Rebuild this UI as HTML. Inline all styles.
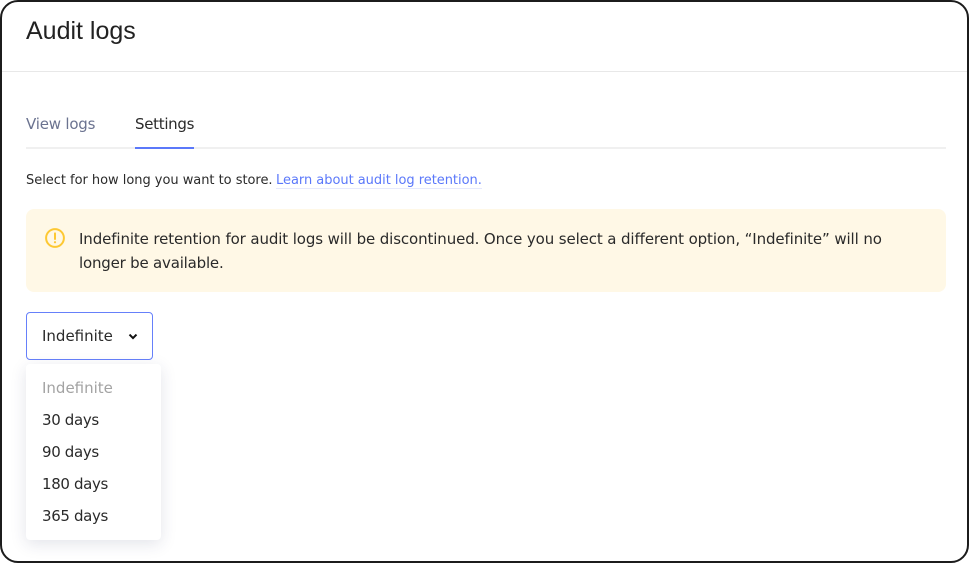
<!DOCTYPE html>
<html><head><meta charset="utf-8"><style>
html,body{margin:0;padding:0;width:969px;height:563px;overflow:hidden;background:#fff}
body{position:relative;font-family:"DejaVu Sans",sans-serif;color:#2a2a2a}
.a{position:absolute;white-space:nowrap}
.t{font-size:15px;line-height:24px;height:24px}
.d{letter-spacing:-.35px}
.s{font-size:13px;line-height:20px;letter-spacing:-.03px}
</style></head><body>
<div class="a" style="left:0;top:0;width:965px;height:559px;border:2px solid #1c1c1c;border-radius:18px"></div>
<div class="a" style="left:26px;top:15px;font-family:'Liberation Sans',sans-serif;font-size:25px;line-height:32px;color:#222">Audit logs</div>
<div class="a" style="left:2px;top:71px;width:965px;height:1px;background:#e8e8e8"></div>
<div class="a t" style="left:26px;top:112px;color:#6b7390;letter-spacing:-.2px">View logs</div>
<div class="a t" style="left:135px;top:112px;color:#2a2a2a;letter-spacing:-.3px">Settings</div>
<div class="a" style="left:26px;top:147px;width:920px;height:2px;background:#f0f0f0"></div>
<div class="a" style="left:135px;top:147px;width:59px;height:2px;background:#5b78fa"></div>
<div class="a s" style="left:26px;top:171px">Select for how long you want to store.</div>
<div class="a s" style="left:276px;top:171px;color:#5b78fa;border-bottom:1px solid #e6e9fd;height:17px">Learn about audit log retention.</div>
<div class="a" style="left:26px;top:209px;width:920px;height:83px;background:#fff8e6;border-radius:8px"></div>
<svg class="a" style="left:45px;top:228px" width="20" height="20" viewBox="0 0 20 20"><circle cx="10" cy="10" r="8.9" fill="none" stroke="#fdc833" stroke-width="2"/><path d="M10 5.4V11" stroke="#fdc833" stroke-width="2" stroke-linecap="round"/><circle cx="10" cy="14.2" r="1.1" fill="#fdc833"/></svg>
<div class="a t" style="left:79px;top:227px;letter-spacing:-.115px">Indefinite retention for audit logs will be discontinued. Once you select a different option, “Indefinite” will no</div>
<div class="a t" style="left:79px;top:251px;letter-spacing:-.2px">longer be available.</div>
<div class="a" style="left:26px;top:312px;width:125px;height:46px;border:1px solid #6680fa;border-radius:4px"></div>
<div class="a t" style="left:42px;top:324px">Indefinite</div>
<svg class="a" style="left:127px;top:332px" width="12" height="10" viewBox="0 0 12 10"><path d="M2.5 2.6L6 6.1L9.5 2.6" fill="none" stroke="#111" stroke-width="2"/></svg>
<div class="a" style="left:26px;top:364px;width:135px;height:176px;background:#fff;border-radius:4px;box-shadow:0 4px 16px rgba(40,50,90,.13)"></div>
<div class="a t" style="left:42px;top:376px;color:#a3a3a3">Indefinite</div>
<div class="a t d" style="left:42px;top:408px">30 days</div>
<div class="a t d" style="left:42px;top:440px">90 days</div>
<div class="a t d" style="left:42px;top:472px">180 days</div>
<div class="a t d" style="left:42px;top:504px">365 days</div>
</body></html>
